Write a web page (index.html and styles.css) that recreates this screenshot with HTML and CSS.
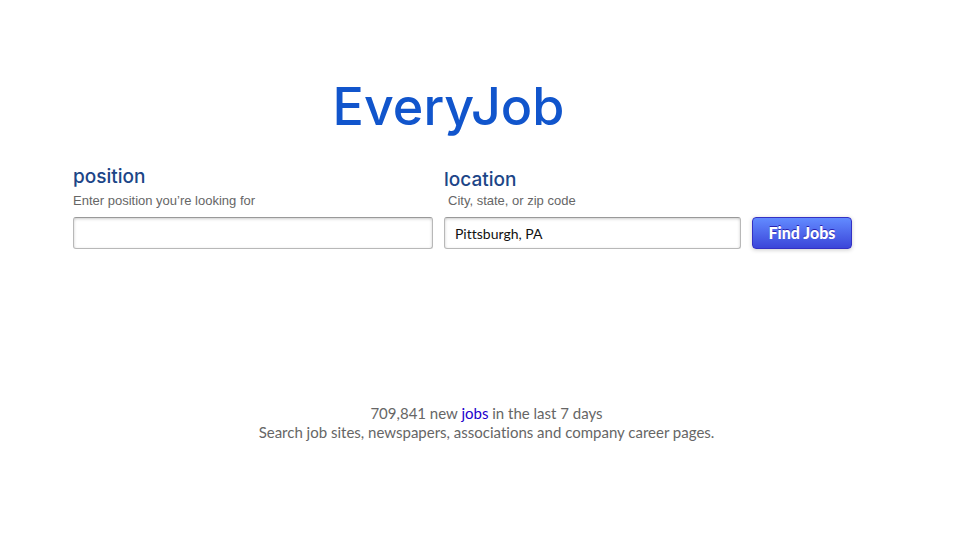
FILE: index.html
```html
<!DOCTYPE html>
<html lang="en">
<head>
<meta charset="utf-8">
<meta name="viewport" content="width=device-width, initial-scale=1">
<title>EveryJob</title>
<link rel="stylesheet" href="styles.css">
</head>
<body>
<main class="page">
  <h1 class="logo">EveryJob</h1>
  <form class="search">
    <div class="field">
      <label class="label" for="position">position</label>
      <span class="hint" id="position-hint">Enter position you’re looking for</span>
      <input class="input" id="position" type="text" aria-describedby="position-hint">
    </div>
    <div class="field field-compact">
      <label class="label" for="location">location</label>
      <span class="hint" id="location-hint">City, state, or zip code</span>
      <input class="input" id="location" type="text" value="Pittsburgh, PA" aria-describedby="location-hint">
    </div>
    <button class="submit" type="submit">Find Jobs</button>
  </form>
  <footer class="summary">
    <p>709,841 new <a href="#jobs">jobs</a> in the last 7 days</p>
    <p>Search job sites, newspapers, associations and company career pages.</p>
  </footer>
</main>
</body>
</html>
```
FILE: styles.css
```css
* {
  box-sizing: border-box;
}

body {
  margin: 0;
  background: #fff;
  color: #666;
  font-family: Lato, "Liberation Sans", sans-serif;
  font-variant-ligatures: none;
}

.page {
  padding: 77px 108px 0 73px;
}

.logo {
  margin: 0 28px 0 0;
  color: #1155cc;
  font-family: Inter, Lato, sans-serif;
  font-size: 52px;
  font-weight: 500;
  line-height: 60px;
  text-align: center;
}

.search {
  display: grid;
  grid-template-columns: 360fr 297fr 100px;
  gap: 11px;
  align-items: end;
  margin-top: 28px;
}

.field {
  display: flex;
  flex-direction: column;
  min-width: 0;
}

.label {
  margin-bottom: 4px;
  color: #1c4587;
  font-family: Inter, Lato, sans-serif;
  font-size: 19px;
  font-weight: 500;
  line-height: 24px;
}

.hint {
  margin-bottom: 8px;
  font-family: "Liberation Sans", sans-serif;
  font-size: 13px;
  line-height: 16px;
}

.field-compact .label {
  margin-bottom: 1px;
}

.field-compact .hint {
  padding-left: 4px;
}

.input {
  width: 100%;
  height: 32px;
  padding: 0 10px;
  border: 1px solid #b8b8b8;
  border-top-color: #999;
  border-radius: 3px;
  background: #fff;
  box-shadow: inset 0 1px 3px #ccc;
  color: #111;
  font: 14px Lato, "Liberation Sans", sans-serif;
  font-variant-ligatures: none;
}

.submit {
  height: 32px;
  padding: 0 0 2px;
  border: 1px solid #3431c4;
  border-radius: 4px;
  background: linear-gradient(#628bff, #3b45d9);
  box-shadow: 0 1px 4px #ccc;
  color: #fff;
  font: 900 16px Lato, "Liberation Sans", sans-serif;
  text-shadow: 0 -1px 0 #2a22ae;
}

.summary {
  margin-top: 155px;
  margin-right: -48px;
  font-size: 15px;
  line-height: 19px;
  text-align: center;
}

.summary p {
  margin: 0;
}

.summary a {
  color: #2200cc;
  text-decoration: none;
}
```
